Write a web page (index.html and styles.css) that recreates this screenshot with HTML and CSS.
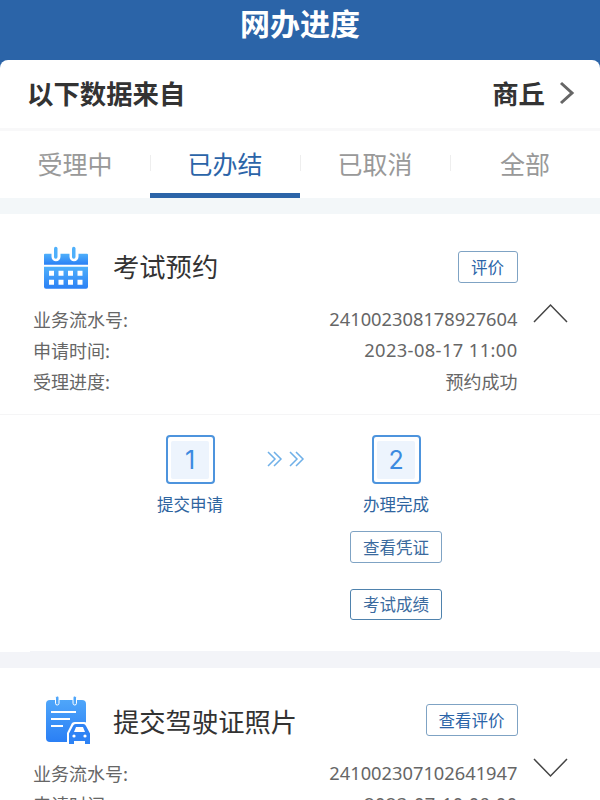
FILE: index.html
```html
<!DOCTYPE html>
<html lang="zh">
<head>
<meta charset="utf-8">
<title>网办进度</title>
<link rel="stylesheet" href="styles.css">
</head>
<body>
<header class="topbar"><h1 class="topbar-title">网办进度</h1></header>
<section class="source">
  <span class="source-label">以下数据来自</span>
  <span class="source-city">商丘
    <svg class="source-arrow" width="16" height="24" viewBox="0 0 16 24"><path d="M2 2l11 10L2 22" fill="none" stroke="#666" stroke-width="3"/></svg>
  </span>
</section>
<nav class="tabs">
  <span class="tab">受理中</span>
  <span class="tab tab-active">已办结</span>
  <span class="tab">已取消</span>
  <span class="tab">全部</span>
</nav>
<main class="list">
  <article class="card">
    <div class="summary">
      <div class="card-head">
        <svg class="card-icon" width="44" height="43" viewBox="2 2.500 44 42.500">
          <defs><linearGradient id="g1" x1="0" y1="0" x2="0" y2="1"><stop offset="0" stop-color="#4fb0fb"/><stop offset="1" stop-color="#2a80f5"/></linearGradient></defs>
          <path d="M3 10h6.500v3a4.500 4.500 0 0 0 9 0v-3h9v3a4.500 4.500 0 0 0 9 0v-3H45a1 1 0 0 1 1 1v10H2V11a1 1 0 0 1 1-1z" fill="url(#g1)"/>
          <path d="M2 23h44v20a2 2 0 0 1-2 2H4a2 2 0 0 1-2-2z" fill="url(#g1)"/>
          <rect x="12" y="3" width="3.500" height="12" rx="1.700" fill="#4fb0fb"/>
          <rect x="30" y="3" width="3.500" height="12" rx="1.700" fill="#4fb0fb"/>
          <g fill="#fff"><rect x="7" y="27" width="5" height="5"/><rect x="16.500" y="27" width="5" height="5"/><rect x="26" y="27" width="5" height="5"/><rect x="35.500" y="27" width="5" height="5"/><rect x="7" y="36" width="5" height="5"/><rect x="16.500" y="36" width="5" height="5"/><rect x="26" y="36" width="5" height="5"/><rect x="35.500" y="36" width="5" height="5"/></g>
        </svg>
        <h2 class="card-title">考试预约</h2>
        <button class="btn btn-small">评价</button>
      </div>
      <div class="rows">
        <div class="row"><span>业务流水号:</span><span class="num">241002308178927604</span></div>
        <div class="row"><span>申请时间:</span><span class="num num-time">2023-08-17 11:00</span></div>
        <div class="row"><span>受理进度:</span><span>预约成功</span></div>
        <svg class="toggle" width="36" height="21" viewBox="0 0 36 21"><path d="M1 19L17.500 2 34 19" fill="none" stroke="#444" stroke-width="1.500"/></svg>
      </div>
    </div>
    <div class="steps">
      <div class="step">
        <div class="step-box"><span class="step-num">1</span></div>
        <span class="step-label">提交申请</span>
      </div>
      <svg class="step-arrows" width="38" height="18" viewBox="0 0 38 18"><g fill="none" stroke="#6fb0e8" stroke-width="1.500"><path d="M1 2l7 7-7 7M7 2l7 7-7 7M23 2l7 7-7 7M29 2l7 7-7 7"/></g></svg>
      <div class="step">
        <div class="step-box"><span class="step-num">2</span></div>
        <span class="step-label">办理完成</span>
        <button class="btn btn-wide">查看凭证</button>
        <button class="btn btn-wide btn-dark">考试成绩</button>
      </div>
    </div>
  </article>
  <article class="card">
    <div class="summary">
      <div class="card-head card-head-second">
        <svg class="card-icon" width="46" height="48" viewBox="0 0 46 48">
          <defs><linearGradient id="g2" x1="0" y1="0" x2="0" y2="1"><stop offset="0" stop-color="#4fa6fa"/><stop offset="1" stop-color="#2a7ff5"/></linearGradient></defs>
          <rect x="0" y="4" width="40" height="42" rx="4" fill="url(#g2)"/>
          <rect x="9.500" y="0" width="3.500" height="9" rx="1.700" fill="#4fa6fa" stroke="#fff"/>
          <rect x="27" y="0" width="3.500" height="9" rx="1.700" fill="#4fa6fa" stroke="#fff"/>
          <path d="M5 16h25M5 23h19M5 30h12" stroke="#fff" stroke-width="1.800"/>
          <path d="M21 48V37l4-8a4 4 0 0 1 4-3h9a4 4 0 0 1 4 3l4 8v11z" fill="#fff"/>
          <path d="M23 48V37.500l4-7.500a3 3 0 0 1 3-2h7a3 3 0 0 1 3 2l4 7.500V48h-5v-3H28v3z" fill="#2e83f5"/>
          <path d="M28 36l2-5h7l2 5z" fill="#fff"/>
          <circle cx="28" cy="40" r="1.600" fill="#fff"/><circle cx="39" cy="40" r="1.600" fill="#fff"/>
        </svg>
        <h2 class="card-title">提交驾驶证照片</h2>
        <button class="btn btn-medium">查看评价</button>
      </div>
      <div class="rows">
        <div class="row"><span>业务流水号:</span><span class="num">241002307102641947</span></div>
        <div class="row"><span>申请时间:</span><span class="num num-time">2023-07-10 09:00</span></div>
        <svg class="toggle" width="36" height="21" viewBox="0 0 36 21"><path d="M1 2l16.500 17L34 2" fill="none" stroke="#444" stroke-width="1.500"/></svg>
      </div>
    </div>
  </article>
</main>
</body>
</html>
```

FILE: styles.css
```css
* { box-sizing: border-box; }
html, body { margin: 0; height: 800px; overflow: hidden; }
body {
  background: #f3f4f8;
  font-family: "Noto Sans CJK SC", "Noto Sans", sans-serif;
  color: #333;
}
.topbar { height: 68px; padding-top: 1px; background: #2b64a8; text-align: center; }
.topbar-title { margin: 0; color: #fff; font-size: 30px; line-height: 42px; font-weight: 700; }
.source {
  display: flex; justify-content: space-between; align-items: center;
  height: 68px; margin-top: -8px; padding: 0 25px 3px 27px;
  background: #fff; border-radius: 8px 8px 0 0;
  font-size: 26.400px; font-weight: 700; color: #333;
}
.source-city { display: flex; align-items: center; gap: 14px; }
.tabs {
  display: grid; grid-template-columns: repeat(4, 150px);
  height: 70px; padding-bottom: 3px; border-top: 3px solid #f8f8f9; background: #fff;
}
.tab {
  position: relative; display: flex; align-items: center; justify-content: center;
  font-size: 25px; color: #999;
}
.tab + .tab::before {
  content: ""; position: absolute; left: 0; top: 24px; height: 16px; width: 1px; background: #eee;
}
.tab-active { color: #2b64a8; }
.tab-active::after {
  content: ""; position: absolute; left: 0; right: 0; bottom: -3px; height: 5px; background: #2b64a8;
}
.list { display: flex; flex-direction: column; gap: 16px; padding-top: 16px; background: linear-gradient(#f3f7f9 16px, #f3f4f8 16px); }
.card { background: #fff; }
.summary { padding: 0 82.500px 0 33px; border-bottom: 1px solid #f5f5f6; height: 201px; }
.card-head { display: flex; align-items: center; height: 89px; padding-top: 17px; }
.card-head-second { padding-top: 15px; }
.card-icon { flex: none; margin-left: 11px; }
.card-head-second .card-icon { margin-left: 13px; }
.card-title { margin: 0 0 0 25px; flex: 1; font-size: 26.300px; font-weight: 400; color: #333; position: relative; top: -2px; }
.card-head-second .card-title { margin-left: 21px; top: 0; }
.btn {
  display: block; padding: 0; background: #fff; border: 1.500px solid #7fa3c4; border-radius: 3px;
  font-family: inherit; font-size: 16.500px; color: #2b64a8; height: 31.500px; line-height: 28px;
}
.btn-small { width: 60px; }
.btn-medium { width: 92px; }
.btn-wide { width: 92px; color: #3a6a9e; margin-top: 14px; flex: none; }
.btn-wide.btn-dark { margin-top: 26px; border-color: #4f82ad; }
.rows { position: relative; }
.row {
  display: flex; justify-content: space-between; height: 31px; align-items: center;
  font-size: 18px; color: #666;
}
.num { font-family: "Noto Sans", sans-serif; font-size: 18.300px; }
.num-time { letter-spacing: 0.400px; }
.toggle { position: absolute; right: -51px; top: 0; }
.steps {
  display: flex; height: 237px; margin: 0 30px; padding: 20px 0 0 115px;
  border-bottom: 1px solid #f3f4f8;
}
.step { width: 90px; display: flex; flex-direction: column; align-items: center; }
.step-box {
  width: 49px; height: 49px; padding: 3.500px; border: 2px solid #4d94dd; border-radius: 4px; background: #fff;
}
.step-num {
  display: flex; align-items: center; justify-content: center;
  width: 100%; height: 100%; background: #edf4fd; border-radius: 2px;
  font-family: "Inter", sans-serif; font-size: 25px; color: #3c8ae0;
}
.step-label { display: block; margin-top: 7px; font-size: 16.500px; line-height: 26px; color: #2f659f; white-space: nowrap; }
.step-arrows { margin: 15px 0 0 32px; flex: none; }
.step-arrows + .step { margin-left: 46px; }
```
